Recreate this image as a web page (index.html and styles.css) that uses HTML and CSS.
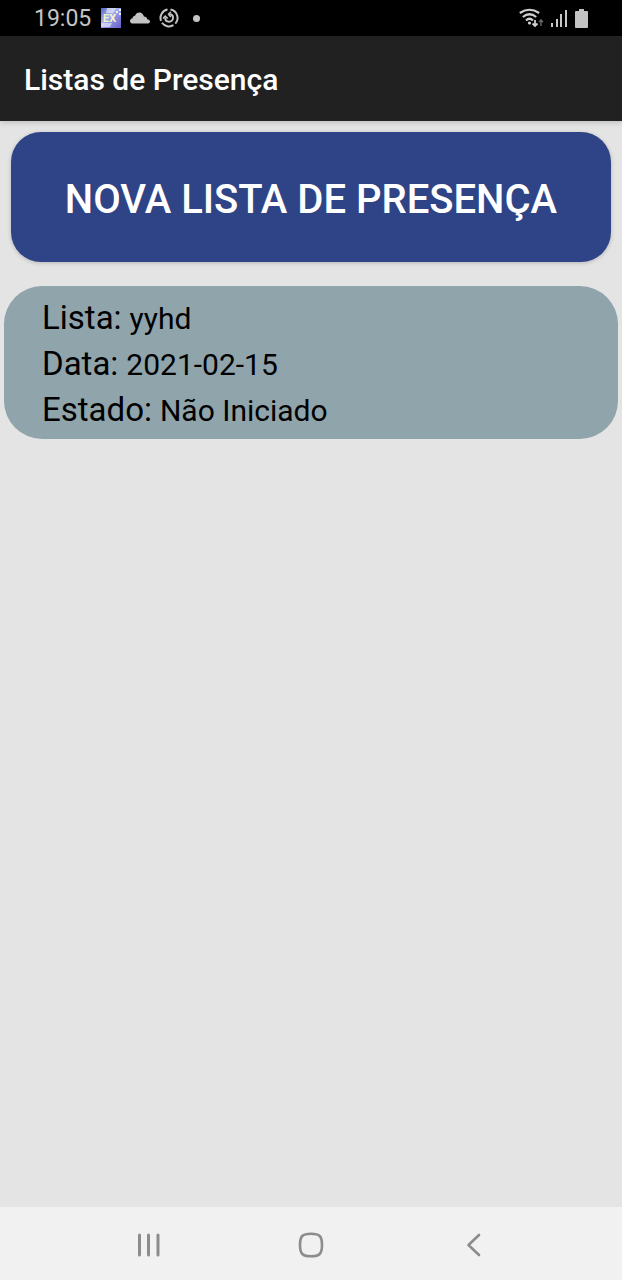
FILE: index.html
```html
<!DOCTYPE html>
<html lang="pt">
<head>
<meta charset="utf-8">
<meta name="viewport" content="width=device-width, initial-scale=1">
<title>Listas de Presença</title>
<link rel="stylesheet" href="styles.css">
</head>
<body>
<div class="status-bar">
  <div class="status-left">
    <span class="clock">19:05</span>
    <svg class="icon-app" width="20" height="20" viewBox="0 0 20 20" aria-hidden="true">
      <defs>
        <linearGradient id="app-fill" x1="0" y1="0" x2="1" y2="1">
          <stop offset="0" stop-color="#5565c4"/>
          <stop offset="0.4" stop-color="#a9b5ee"/>
          <stop offset="0.6" stop-color="#8f8fe0"/>
          <stop offset="1" stop-color="#6560c8"/>
        </linearGradient>
      </defs>
      <rect width="20" height="20" fill="url(#app-fill)"/>
      <path d="M6 0h9l-3 5H5zM0 15h11l-2 4H0z" fill="#dfe5fb" opacity="0.7"/>
      <path d="M15 3h2v2h-2zM18 1h2v2h-2zM18 5h2v2h-2z" fill="#eef0d8"/>
      <text class="app-label" x="2" y="14">EX</text>
    </svg>
    <svg class="icon-cloud" width="20" height="12" viewBox="0 0 20 12" aria-hidden="true">
      <path d="M3 11.500C1 11.500 0 10.300 0 8.900 0 7.500 1.100 6.400 2.600 6.200 2.600 4.700 3.700 3.700 5 3.700 5.800 1.600 7.300.4 9.300.4c2.500 0 4.200 1.700 4.600 4.200 2 0 3.100 1.100 3.300 2.700 1.700.1 2.800 1 2.800 2.300 0 1.200-.9 1.900-2 1.900z" fill="#c4c4c4"/>
    </svg>
    <svg class="icon-sync" width="20" height="20" viewBox="0 0 20 20" fill="none" stroke="#c4c4c4" stroke-width="2" aria-hidden="true">
      <path d="M11.500 1.600A8.500 8.500 0 0 1 16.300 15.700M14.500 17.200A8.500 8.500 0 0 1 3 14.800M2 12.800A8.500 8.500 0 0 1 8.500 1.600"/>
      <path d="M6.200 9.500C6.200 12 7.800 13.700 10 13.700s4-1.700 4-3.900S12.500 6.300 10.500 6.300"/>
      <path d="M4 10.500l2.200-2.400 2.600 2.400M11.800 3.700L9.500 6.300l2.300 2.600" stroke-width="1.500"/>
    </svg>
    <span class="dot"></span>
  </div>
  <div class="status-right">
    <svg width="25" height="20" viewBox="0 0 25 20" fill="none" stroke="#d0d0d0" stroke-width="2.200" aria-hidden="true">
      <path d="M.8 5Q10.500 -1.500 20.200 5M3.800 9Q10.500 3.500 17.200 9M7 12.500Q10.500 9 14 12.500"/>
      <circle cx="10.500" cy="15" r="1.600" fill="#d0d0d0" stroke="none"/>
      <path d="M16 12v6M13.500 15.500L16 18l2.500-2.500" stroke-width="1.800"/>
      <path d="M22 18v-6M20 14l2-2 2 2" stroke="#6a6a6a" stroke-width="1.400"/>
    </svg>
    <svg width="17" height="19" viewBox="0 0 17 19" fill="#c9c9c9" aria-hidden="true">
      <path d="M0 14h2v4H0zM5 10h2v8H5zM9 5h2v13H9zM14 1h2v17h-2z"/>
    </svg>
    <svg width="13" height="19" viewBox="0 0 13 19" fill="#c4c4c4" aria-hidden="true">
      <path d="M4 0h5v2h3a1 1 0 0 1 1 1v15a1 1 0 0 1-1 1H1a1 1 0 0 1-1-1V3a1 1 0 0 1 1-1h3z"/>
    </svg>
  </div>
</div>
<header class="app-bar">
  <h1 class="app-title">Listas de Presença</h1>
</header>
<main class="content">
  <button class="new-list" type="button">NOVA LISTA DE PRESENÇA</button>
  <dl class="list-card">
    <div class="field"><dt>Lista:</dt><dd>yyhd</dd></div>
    <div class="field"><dt>Data:</dt><dd>2021-02-15</dd></div>
    <div class="field"><dt>Estado:</dt><dd>Não Iniciado</dd></div>
  </dl>
</main>
<nav class="nav-bar">
  <button class="nav-button" type="button" aria-label="Recentes">
    <svg width="26" height="26" viewBox="0 0 26 26" fill="none" stroke="#8c8c8c" stroke-width="3" stroke-linecap="round">
      <path d="M3.500 3v20M12.500 3v20M22 3v20"/>
    </svg>
  </button>
  <button class="nav-button" type="button" aria-label="Início">
    <svg width="26" height="26" viewBox="0 0 26 26" fill="none" stroke="#8c8c8c" stroke-width="2.600">
      <path d="M13 1.800C21.500 1.800 24 4 24 13s-2.500 11.200-11 11.200S2 22 2 13 4.500 1.800 13 1.800z"/>
    </svg>
  </button>
  <button class="nav-button" type="button" aria-label="Voltar">
    <svg width="26" height="26" viewBox="0 0 26 26" fill="none" stroke="#8c8c8c" stroke-width="2.600" stroke-linecap="round" stroke-linejoin="round">
      <path d="M19 3L8.500 13 19 23"/>
    </svg>
  </button>
</nav>
</body>
</html>
```
FILE: styles.css
```css
* {
  box-sizing: border-box;
}

body {
  display: flex;
  flex-direction: column;
  min-height: 100vh;
  margin: 0;
  background: #e4e4e4;
  color: #000;
  font-family: Roboto, "Liberation Sans", sans-serif;
}

button {
  border: 0;
  font-family: inherit;
}

svg {
  display: block;
  flex: none;
}

.status-bar {
  display: flex;
  align-items: center;
  justify-content: space-between;
  height: 36px;
  padding: 0 34px;
  background: #000;
}

.status-left,
.status-right {
  display: flex;
  align-items: center;
}

.status-left {
  gap: 9px;
}

.status-right {
  gap: 7px;
}

.clock {
  padding: 2px 1px 0 0;
  color: #c4c4c4;
  font-size: 23px;
  line-height: 34px;
}

.app-label {
  fill: #f2f4c4;
  font-size: 11px;
  font-weight: 700;
}

.dot {
  width: 7px;
  height: 7px;
  margin-left: 5px;
  border-radius: 50%;
  background: #c4c4c4;
}

.app-bar {
  padding: 23px 24px 21px;
  background: #212121;
  box-shadow: 0 1px 6px rgba(0, 0, 0, 0.2);
}

.app-title {
  margin: 0;
  color: #fff;
  font-size: 30px;
  font-weight: 500;
  line-height: 41px;
}

.content {
  display: flex;
  flex: 1;
  flex-direction: column;
  gap: 24px;
  padding: 11px 4px;
}

.new-list {
  margin: 0 7px;
  padding: 45px 16px 39px;
  border-radius: 30px;
  background: #2f4486;
  box-shadow: 0 1px 4px rgba(0, 0, 0, 0.2);
  color: #fff;
  font-size: 40px;
  font-weight: 500;
  line-height: 46px;
}

.list-card {
  margin: 0;
  padding: 9px 38px 6px;
  border-radius: 38px;
  background: #90a4ac;
}

.field {
  display: flex;
  align-items: baseline;
  gap: 8px;
  line-height: 45px;
}

.field dt {
  font-size: 33px;
}

.field dd {
  margin: 0;
  font-size: 30px;
}

.nav-bar {
  display: flex;
  justify-content: center;
  background: #f1f1f1;
}

.nav-button {
  display: flex;
  align-items: center;
  justify-content: center;
  width: 26%;
  height: 73px;
  padding: 2px 0 0;
  background: none;
}
```
